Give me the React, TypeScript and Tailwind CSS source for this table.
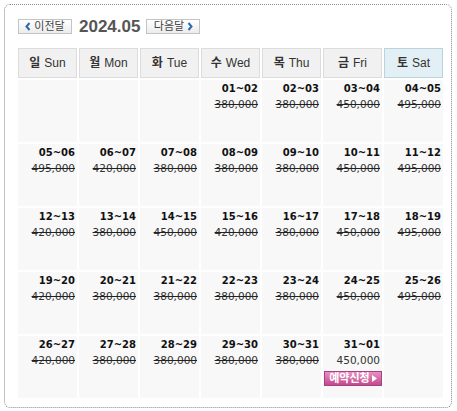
import React from "react";

type Cell = { d: string; p: string; open?: boolean } | null;

const rows: Cell[][] = [
  [null, null, null, { d: "01~02", p: "380,000" }, { d: "02~03", p: "380,000" }, { d: "03~04", p: "450,000" }, { d: "04~05", p: "495,000" }],
  [{ d: "05~06", p: "495,000" }, { d: "06~07", p: "420,000" }, { d: "07~08", p: "380,000" }, { d: "08~09", p: "380,000" }, { d: "09~10", p: "380,000" }, { d: "10~11", p: "450,000" }, { d: "11~12", p: "495,000" }],
  [{ d: "12~13", p: "420,000" }, { d: "13~14", p: "380,000" }, { d: "14~15", p: "450,000" }, { d: "15~16", p: "420,000" }, { d: "16~17", p: "380,000" }, { d: "17~18", p: "450,000" }, { d: "18~19", p: "495,000" }],
  [{ d: "19~20", p: "420,000" }, { d: "20~21", p: "380,000" }, { d: "21~22", p: "380,000" }, { d: "22~23", p: "380,000" }, { d: "23~24", p: "380,000" }, { d: "24~25", p: "450,000" }, { d: "25~26", p: "495,000" }],
  [{ d: "26~27", p: "420,000" }, { d: "27~28", p: "380,000" }, { d: "28~29", p: "380,000" }, { d: "29~30", p: "380,000" }, { d: "30~31", p: "380,000" }, { d: "31~01", p: "450,000", open: true }, null],
];

const heads = [
  ["일", "Sun"],
  ["월", "Mon"],
  ["화", "Tue"],
  ["수", "Wed"],
  ["목", "Thu"],
  ["금", "Fri"],
  ["토", "Sat"],
];

const kr = { fontFamily: '"Liberation Sans", "Noto Sans CJK KR", sans-serif' };
const vd = { fontFamily: '"DejaVu Sans", "Noto Sans CJK KR", sans-serif' };

function NavBtn({ label, dir }: { label: string; dir: "prev" | "next" }) {
  const chev = (
    <svg width="6" height="9" viewBox="0 0 6 9" className="shrink-0">
      {dir === "prev" ? (
        <path d="M4.5 1 L1.5 4.5 L4.5 8" fill="none" stroke="#2d6aa8" strokeWidth="2" />
      ) : (
        <path d="M1.5 1 L4.5 4.5 L1.5 8" fill="none" stroke="#2d6aa8" strokeWidth="2" />
      )}
    </svg>
  );
  return (
    <div
      className="flex h-[15px] w-[54px] items-center justify-center gap-[3px] border border-[#c4c4c4] bg-gradient-to-b from-white to-[#ececec] text-[11px] leading-none text-[#444]"
      style={kr}
    >
      {dir === "prev" && chev}
      <span>{label}</span>
      {dir === "next" && chev}
    </div>
  );
}

export default function App() {
  return (
    <div className="bg-white p-[4px]" style={kr}>
      <div className="h-[404px] w-[448px] rounded-[6px] border border-dotted border-[#8a8a8a] pl-[13px] pt-[14px]">
        <div className="flex h-[15px] items-center">
          <NavBtn label="이전달" dir="prev" />
          <div
            className="ml-[7px] mr-[6px] text-[17px] font-bold leading-none text-[#555]"
            style={{ fontFamily: '"Liberation Sans", sans-serif' }}
          >
            2024.05
          </div>
          <NavBtn label="다음달" dir="next" />
        </div>
        <div className="mt-[14px] grid grid-cols-[repeat(7,59px)] grid-rows-[30px_repeat(5,62px)] gap-[2px]">
          {heads.map(([k, e], i) => (
            <div
              key={e}
              className={
                "flex items-center justify-center border text-[12px] text-[#333] " +
                (i === 6 ? "border-[#b9d3df] bg-[#e2f0f6]" : "border-[#dcdcdc] bg-[#f1f1f1]")
              }
            >
              <span className="font-bold">{k}</span>
              <span className="ml-[4px]">{e}</span>
            </div>
          ))}
          {rows.flat().map((c, i) => (
            <div key={i} className="flex flex-col items-end bg-[#f8f8f8] pr-[2px] pt-[3px]" style={vd}>
              {c && (
                <>
                  <div className="text-[10px] font-bold leading-[12px] text-[#111]">{c.d}</div>
                  <div
                    className={
                      "mt-[3px] text-[10.5px] leading-[12px] text-[#333] " + (c.open ? "" : "line-through decoration-[#222]")
                    }
                  >
                    {c.p}
                  </div>
                  {c.open && (
                    <div
                      className="mr-[-2px] mt-[5px] flex h-[15px] w-[58px] items-center justify-center gap-[2px] border border-[#a9417f] bg-gradient-to-b from-[#e88fc4] to-[#c2498f] text-[11px] font-bold leading-none text-white"
                      style={kr}
                    >
                      <span>예약신청</span>
                      <svg width="5" height="7" viewBox="0 0 5 7">
                        <path d="M0 0 L5 3.5 L0 7 Z" fill="#fff" />
                      </svg>
                    </div>
                  )}
                </>
              )}
            </div>
          ))}
        </div>
      </div>
    </div>
  );
}
